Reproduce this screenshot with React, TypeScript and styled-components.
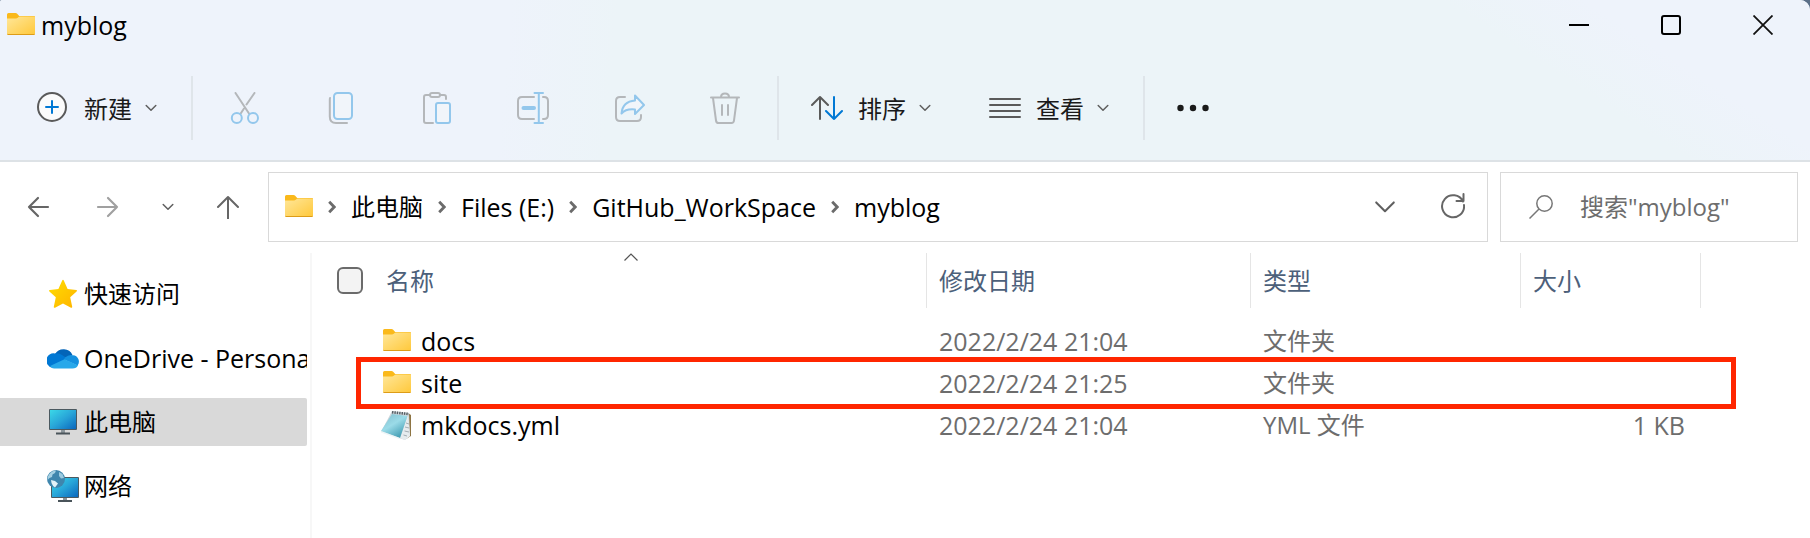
import React from "react";
import styled, { createGlobalStyle } from "styled-components";

const sans = `"Open Sans", "Noto Sans CJK SC", sans-serif`;

const GlobalStyle = createGlobalStyle`
  *, *::before, *::after { box-sizing: border-box; }
  body {
    margin: 0;
    background: #ffffff;
    color: #000000;
    font-family: ${sans};
    font-size: 24px;
    line-height: 32px;
  }
  button, input { font: inherit; color: inherit; }
  svg { display: block; flex: none; }
`;

const Window = styled.div`
  display: flex;
  flex-direction: column;
  min-height: 100vh;
`;

const Backdrop = styled.div`
  background: #5b6f88;
`;

const Header = styled.header`
  border-radius: 2px 10px 0 0;
  border-bottom: 2px solid #dde2e6;
  background:
    linear-gradient(95deg, #eef3fb 28%, #eef3fb00 34%),
    linear-gradient(33deg, #eef3fb00 82%, #eef3fb 89%),
    #ecf4f8;
`;

const TitleBar = styled.div`
  display: flex;
  align-items: center;
  height: 50px;
  padding: 0 1px 0 7px;
`;

const Title = styled.h1`
  flex: 1;
  margin: 0 0 0 6px;
  font-size: 25px;
  font-weight: 400;
`;

const PlainButton = styled.button`
  display: flex;
  align-items: center;
  justify-content: center;
  padding: 0;
  border: 0;
  background: none;
`;

const CaptionButton = styled(PlainButton)`
  width: 92px;
  height: 50px;
`;

const Toolbar = styled.div`
  display: flex;
  align-items: center;
  height: 110px;
  padding: 6px 0 0 9px;
`;

const Separator = styled.span`
  width: 2px;
  height: 64px;
  margin: 0 4px;
  background: #dfe5ea;
`;

const MenuButton = styled(PlainButton)`
  height: 64px;
  padding: 0 30px 0 28px;
  color: #1a1a1a;
`;

const MenuLabel = styled.span`
  margin: 0 13px 0 15px;
  padding-top: 2px;
`;

const ToolButton = styled(PlainButton)<{ $width: number }>`
  width: ${(p) => p.$width}px;
  height: 64px;
`;

const NavRow = styled.div`
  display: flex;
  align-items: center;
  padding: 10px 12px 11px 4px;
`;

const NavButton = styled(PlainButton)<{ $width: number }>`
  width: ${(p) => p.$width}px;
  height: 68px;
`;

const AddressBar = styled.div`
  display: flex;
  flex: 1;
  align-items: center;
  height: 70px;
  margin: 0 12px 0 6px;
  padding-left: 16px;
  border: 1px solid #d9d9d9;
`;

const Crumbs = styled.nav`
  display: flex;
  flex: 1;
  align-items: center;
  gap: 15px;
  margin-left: 15px;
`;

const Crumb = styled.a<{ $latin: boolean }>`
  color: #000000;
  font-size: ${(p) => (p.$latin ? 25 : 24)}px;
  text-decoration: none;
  white-space: nowrap;
`;

const SearchBox = styled.label`
  display: flex;
  align-items: center;
  gap: 27px;
  width: 298px;
  height: 70px;
  padding: 0 12px 0 28px;
  border: 1px solid #d9d9d9;
`;

const SearchInput = styled.input`
  flex: 1;
  min-width: 0;
  padding: 0;
  border: 0;
  outline: 0;
  background: none;
  &::placeholder { color: #6d6d6d; opacity: 1; }
`;

const Body = styled.div`
  display: flex;
  flex: 1;
`;

const Sidebar = styled.nav`
  display: flex;
  flex: none;
  flex-direction: column;
  gap: 16px;
  width: 312px;
  padding: 17px 3px 0 0;
  border-right: 2px solid #f7f7f7;
`;

const Place = styled.a<{ $active?: boolean; $latin: boolean }>`
  display: flex;
  align-items: center;
  gap: 5px;
  height: 48px;
  padding-left: 47px;
  overflow: hidden;
  border-radius: 0 2px 2px 0;
  background: ${(p) => (p.$active ? "#d9d9d9" : "transparent")};
  color: #000000;
  font-size: ${(p) => (p.$latin ? 25 : 24)}px;
  text-decoration: none;
  white-space: nowrap;
`;

const Files = styled.main`
  flex: 1;
  padding-right: 109px;
`;

const FileTable = styled.table`
  width: 100%;
  table-layout: fixed;
  border-collapse: collapse;
`;

const Column = styled.col<{ $width?: number }>`
  width: ${(p) => (p.$width ? `${p.$width}px` : "auto")};
`;

const HeadCell = styled.th`
  padding: 0 0 12px;
  color: #4c607a;
  font-weight: 400;
  text-align: left;
`;

const HeadLabel = styled.div<{ $first?: boolean }>`
  position: relative;
  display: flex;
  align-items: center;
  height: 55px;
  margin-left: ${(p) => (p.$first ? 24 : 0)}px;
  padding-left: ${(p) => (p.$first ? 1 : 12)}px;
  border-right: 1px solid #e5e5e5;
`;

const SortMark = styled.span`
  position: absolute;
  top: 0;
  left: 50%;
  margin-left: -7px;
`;

const SelectAll = styled.input`
  appearance: none;
  width: 26px;
  height: 27px;
  margin: 0 23px 0 0;
  border: 2px solid #6b6b6b;
  border-radius: 6px;
  background: #f3f3f3;
`;

const FileRow = styled.tr`
  position: relative;
  height: 42px;
`;

const Cell = styled.td<{ $align?: "right"; $latin?: boolean }>`
  padding: 0 16px 0 12px;
  color: #6d6d6d;
  font-size: ${(p) => (p.$latin ? 25 : 24)}px;
  text-align: ${(p) => p.$align ?? "left"};
  white-space: nowrap;
`;

const NameCell = styled.td`
  padding: 0 0 0 69px;
  font-size: 25px;
`;

const FileName = styled.span`
  display: flex;
  align-items: center;
  gap: 8px;
`;

const IconSlot = styled.span`
  display: flex;
  justify-content: center;
  width: 32px;
`;

const Highlight = styled.span`
  position: absolute;
  top: -5px;
  bottom: -5px;
  left: 44px;
  right: -35px;
  border: 5px solid #ff2600;
  pointer-events: none;
`;

const FolderIcon = () => (
  <svg width="28" height="32" viewBox="0 0 28 32" aria-hidden="true">
    <defs>
      <linearGradient id="folder" x1="0" y1="0" x2="1" y2="1">
        <stop offset="0" stopColor="#ffe79a" />
        <stop offset="1" stopColor="#ffc83a" />
      </linearGradient>
    </defs>
    <path d="M0 5.5Q0 4 1.5 4H8.5Q9.5 4 10.2 4.8L12.2 7H27Q28 7 28 8V12H0z" fill="#fab91b" />
    <path d="M0 9.5H9Q10 9.5 10.8 8.7L11.6 8Q12.1 7.4 13 7.4H27Q28 7.4 28 8.4V24.5Q28 26 26.5 26H1.5Q0 26 0 24.5z" fill="url(#folder)" />
    <path d="M0 24.4Q.2 26 1.5 26H26.5Q27.8 26 28 24.4Q27.6 25 26.5 25H1.5Q.4 25 0 24.4z" fill="#dd9c17" />
  </svg>
);

const NotepadIcon = () => (
  <svg width="32" height="32" viewBox="0 0 32 32" aria-hidden="true">
    <defs>
      <linearGradient id="pad" x1="0" y1="0" x2=".7" y2="1">
        <stop offset="0" stopColor="#7fbccb" />
        <stop offset=".5" stopColor="#9bdbe8" />
        <stop offset="1" stopColor="#3f9bb2" />
      </linearGradient>
    </defs>
    <path d="M27 4L30 6V27L25 30z" fill="#8d7443" />
    <path d="M11 2L28 4L29 27L24 31L0 23z" fill="#cfd7dc" />
    <path d="M27 5L29 27L24 31L19 29z" fill="#e6ebee" />
    <path d="M11 5L26.500 7L19 29L0 22z" fill="url(#pad)" />
    <path d="M0 22L19 29L18.500 30.300L.5 23.700z" fill="#eef6f8" />
    <path d="M11 3.200L28 5" stroke="#555d62" strokeWidth="2.600" strokeDasharray="1.400 1" />
    <path d="M25 14L28 15M24 18L28 19M23.500 22L28 23M22.500 26L26 27" stroke="#a4adb3" />
  </svg>
);

const StarIcon = () => (
  <svg width="32" height="32" viewBox="0 0 32 32" aria-hidden="true">
    <defs>
      <linearGradient id="star" x1="0" y1="0" x2="1" y2="1">
        <stop offset="0" stopColor="#ffde00" />
        <stop offset="1" stopColor="#ffb300" />
      </linearGradient>
    </defs>
    <path d="M15.200 2.500Q16 1 16.800 2.500L20.600 11.100L29.300 12Q30.700 12.400 29.600 13.500L23.200 19.200L25.200 28.800Q25.200 30.300 24 29.700L16 25.500L8 29.700Q6.600 30.200 6.800 28.800L8.800 19.200L2.400 13.500Q1.300 12.400 2.800 12L11.400 11.100z" fill="url(#star)" />
  </svg>
);

const CloudIcon = () => (
  <svg width="32" height="32" viewBox="0 0 32 32" aria-hidden="true">
    <path d="M8 12A10 10 0 0 1 25.500 13L17 18z" fill="#0364b8" />
    <path d="M8 11.500Q12 10.800 15 13L21 17L5 25.500A7 7 0 0 1 8 11.500z" fill="#0078d4" />
    <path d="M18 15.500Q22 12 26 13.300A6.300 6.300 0 0 1 30.500 23.500L17 17.500z" fill="#1490df" />
    <path d="M3 24L17.500 17.200L31 23.200Q29.500 26.500 25.500 26.500H7Q4.500 26.500 3 24z" fill="#28a8ea" />
  </svg>
);

const ScreenGradient = () => (
  <defs>
    <linearGradient id="screen" x1="0" y1="0" x2="1" y2="1">
      <stop offset="0" stopColor="#3bd8e8" />
      <stop offset=".5" stopColor="#28a5d8" />
      <stop offset="1" stopColor="#0a67bd" />
    </linearGradient>
  </defs>
);

const ComputerIcon = () => (
  <svg width="32" height="32" viewBox="0 0 32 32" aria-hidden="true">
    <ScreenGradient />
    <rect x="2" y="3" width="28" height="21" rx="1" fill="#4b5960" />
    <rect x="3" y="4" width="26" height="19" fill="url(#screen)" />
    <path d="M14 24H18V27H14z" fill="#8b959b" />
    <path d="M9 26.500H23V28.500H9z" fill="#4a545a" />
  </svg>
);

const NetworkIcon = () => (
  <svg width="32" height="32" viewBox="0 0 32 32" aria-hidden="true">
    <ScreenGradient />
    <rect x="4" y="7" width="28" height="21" rx="1" fill="#4b5960" />
    <rect x="5" y="8" width="26" height="19" fill="url(#screen)" />
    <path d="M16 28H20V31H16z" fill="#8b959b" />
    <path d="M11 30H25V32H11z" fill="#4a545a" />
    <circle cx="9" cy="9" r="9" fill="#3f86ad" />
    <path d="M2 4.500Q5 .5 9 .5L8 3L5.500 4.500L5 7L2.500 8L.5 10Q0 7 2 4.500z" fill="#a5d0e2" />
    <path d="M4 10L8 11L11 13.500L8 17.500Q5.500 16 4.500 13z" fill="#e3f2f7" />
    <path d="M12 2L15.500 4L17 8L14 8.500L12 6z" fill="#9ccbe0" />
  </svg>
);

const Chevron = ({ size = 12, color = "#5f5f5f", width = 1.5 }: { size?: number; color?: string; width?: number }) => (
  <svg width={size} height={size} viewBox="0 0 12 12" fill="none" stroke={color} strokeWidth={width} strokeLinejoin="round" strokeLinecap="round" aria-hidden="true">
    <path d="M1.200 3.500L6 8.300L10.800 3.500" />
  </svg>
);

const CrumbArrow = () => (
  <svg width="8" height="14" viewBox="0 0 8 14" fill="none" stroke="#6b6b6b" strokeWidth="2.800" aria-hidden="true">
    <path d="M1.200 1.800L6.200 7L1.200 12.200" />
  </svg>
);

const grey = "#b4b7ba";
const blue = "#93c7ec";

const ToolIcon = ({ children }: { children: React.ReactNode }) => (
  <svg width="32" height="32" viewBox="0 0 32 32" fill="none" strokeWidth="2" strokeLinecap="round" strokeLinejoin="round" aria-hidden="true">
    {children}
  </svg>
);

const CutIcon = () => (
  <ToolIcon>
    <path d="M6.500 1L20 21.500M25.500 1L17.500 12.500M15 16.500L11.700 21.500" stroke={grey} />
    <circle cx="7.800" cy="26" r="5" stroke={blue} />
    <circle cx="24" cy="26" r="5" stroke={blue} />
  </ToolIcon>
);

const CopyIcon = () => (
  <ToolIcon>
    <path d="M5 6Q4.800 6.500 4.800 8V24.500Q4.800 31 11 31H22" stroke={grey} />
    <rect x="9" y="1" width="18" height="26" rx="3.500" stroke={blue} fill="#f1f5fa" />
  </ToolIcon>
);

const PasteIcon = () => (
  <ToolIcon>
    <path d="M9 3H5Q3 3 3 5V29Q3 31 5 31H12M19 3H23Q25 3 25 5V7" stroke={grey} />
    <rect x="9" y="1" width="10" height="4" rx="2" stroke={grey} />
    <rect x="15" y="11" width="14" height="20" rx="2" stroke={blue} fill="#f1f5fa" />
  </ToolIcon>
);

const RenameIcon = () => (
  <ToolIcon>
    <path d="M17 5H5Q1 5 1 9V23Q1 27 5 27H17M26 5H27Q31 5 31 9V23Q31 27 27 27H26" stroke={grey} />
    <path d="M17.500 1H26M17.500 31H26M21.800 1V31" stroke={blue} />
    <path d="M6.500 16H17" stroke={blue} strokeWidth="4" />
  </ToolIcon>
);

const ShareIcon = () => (
  <ToolIcon>
    <path d="M12 5H7Q3 5 3 9V25Q3 29 7 29H24Q28 29 28 25V23" stroke={grey} />
    <path d="M22 3.500L31 13L22 22V17.500Q13 16.500 8.500 21.500Q9.500 9.500 22 8.500z" stroke={blue} fill="#f1f5fa" />
  </ToolIcon>
);

const DeleteIcon = () => (
  <ToolIcon>
    <path d="M2 5.500H30M12 5Q12 1.500 16 1.500T20 5M4 6L7 28.500Q7.300 31 9.500 31H22.500Q24.700 31 25 28.500L28 6M13 13V23M19 13V23" stroke={grey} />
  </ToolIcon>
);

const NewIcon = () => (
  <ToolIcon>
    <circle cx="15" cy="15" r="14" stroke="#5a5a5a" fill="#fbfbfb" />
    <path d="M15 9V21M9 15H21" stroke="#0078d4" />
  </ToolIcon>
);

const SortIcon = () => (
  <ToolIcon>
    <path d="M9 27V5M1 13L9 5L17 13" stroke="#5a5a5a" />
    <path d="M23 5V27M15 19L23 27L31 19" stroke="#0078d4" />
  </ToolIcon>
);

const ViewIcon = () => (
  <ToolIcon>
    <path d="M1 7H31M1 13H31M1 19H31M1 25H31" stroke="#5a5a5a" />
  </ToolIcon>
);

const MoreIcon = () => (
  <ToolIcon>
    <g fill="#1a1a1a">
      <circle cx="3.500" cy="16" r="3.200" />
      <circle cx="16" cy="16" r="3.200" />
      <circle cx="28.500" cy="16" r="3.200" />
    </g>
  </ToolIcon>
);

const ArrowIcon = ({ turn = 0, color = "#666666" }: { turn?: number; color?: string }) => (
  <svg width="24" height="24" viewBox="0 0 24 24" fill="none" stroke={color} strokeWidth="2.200" strokeLinecap="round" strokeLinejoin="round" aria-hidden="true">
    <path d="M22 12H3M12 3L3 12L12 21" transform={`rotate(${turn} 12.500 12)`} />
  </svg>
);

const UpIcon = () => (
  <svg width="24" height="24" viewBox="0 0 24 24" fill="none" stroke="#666666" strokeWidth="2" strokeLinecap="round" strokeLinejoin="round" aria-hidden="true">
    <path d="M12 23.500V2M2 12L12 2L22 12" />
  </svg>
);

const editTools = [
  { label: "剪切", Icon: CutIcon },
  { label: "复制", Icon: CopyIcon },
  { label: "粘贴", Icon: PasteIcon },
  { label: "重命名", Icon: RenameIcon },
  { label: "共享", Icon: ShareIcon },
  { label: "删除", Icon: DeleteIcon },
];

const isLatin = (text: string) => !/[\u4e00-\u9fff]/.test(text);

const crumbs = ["此电脑", "Files (E:)", "GitHub_WorkSpace", "myblog"];

const places = [
  { label: "快速访问", Icon: StarIcon },
  { label: "OneDrive - Personal", Icon: CloudIcon },
  { label: "此电脑", Icon: ComputerIcon, active: true },
  { label: "网络", Icon: NetworkIcon },
];

const files = [
  { name: "docs", date: "2022/2/24 21:04", type: "文件夹", size: "", Icon: FolderIcon },
  { name: "site", date: "2022/2/24 21:25", type: "文件夹", size: "", Icon: FolderIcon, marked: true },
  { name: "mkdocs.yml", date: "2022/2/24 21:04", type: "YML 文件", size: "1 KB", Icon: NotepadIcon },
];

const Menu = ({ label, icon }: { label: string; icon: React.ReactNode }) => (
  <MenuButton type="button">
    {icon}
    <MenuLabel>{label}</MenuLabel>
    <Chevron />
  </MenuButton>
);

export default function App() {
  return (
    <Window>
      <GlobalStyle />
      <Backdrop>
        <Header>
          <TitleBar>
            <FolderIcon />
            <Title>myblog</Title>
            <CaptionButton type="button" aria-label="最小化">
              <svg width="20" height="20" viewBox="0 0 20 20" stroke="#000" strokeWidth="2"><path d="M0 10H20" /></svg>
            </CaptionButton>
            <CaptionButton type="button" aria-label="最大化">
              <svg width="20" height="20" viewBox="0 0 20 20" fill="none" stroke="#000" strokeWidth="2"><rect x="1" y="1" width="18" height="18" rx="2" /></svg>
            </CaptionButton>
            <CaptionButton type="button" aria-label="关闭">
              <svg width="20" height="20" viewBox="0 0 20 20" stroke="#111" strokeWidth="1.800"><path d="M.5 .5L19.500 19.500M19.500 .5L.5 19.500" /></svg>
            </CaptionButton>
          </TitleBar>
          <Toolbar>
            <Menu label="新建" icon={<NewIcon />} />
            <Separator />
            {editTools.map(({ label, Icon }) => (
              <ToolButton key={label} type="button" aria-label={label} $width={96}>
                <Icon />
              </ToolButton>
            ))}
            <Separator />
            <Menu label="排序" icon={<SortIcon />} />
            <Menu label="查看" icon={<ViewIcon />} />
            <Separator />
            <ToolButton type="button" aria-label="更多" $width={88}>
              <MoreIcon />
            </ToolButton>
          </Toolbar>
        </Header>
      </Backdrop>

      <NavRow>
        <NavButton type="button" aria-label="后退" $width={68}><ArrowIcon /></NavButton>
        <NavButton type="button" aria-label="前进" $width={70}><ArrowIcon turn={180} color="#a0a0a0" /></NavButton>
        <NavButton type="button" aria-label="最近位置" $width={52}><Chevron /></NavButton>
        <NavButton type="button" aria-label="向上" $width={68}><UpIcon /></NavButton>
        <AddressBar>
          <FolderIcon />
          <Crumbs aria-label="路径">
            {crumbs.map((name) => (
              <React.Fragment key={name}>
                <CrumbArrow />
                <Crumb href="#" $latin={isLatin(name)}>{name}</Crumb>
              </React.Fragment>
            ))}
          </Crumbs>
          <NavButton type="button" aria-label="以前的位置" $width={68}><Chevron size={22} width={1.1} /></NavButton>
          <NavButton type="button" aria-label="刷新" $width={68}>
            <svg width="24" height="28" viewBox="0 0 24 28" fill="none" stroke="#666" strokeWidth="2" strokeLinecap="round" strokeLinejoin="round">
              <path d="M22 8.500A11 11 0 1 0 23 12M22.500 1V8H15.500" />
            </svg>
          </NavButton>
        </AddressBar>
        <SearchBox>
          <svg width="24" height="24" viewBox="0 0 24 24" fill="none" stroke="#777" strokeWidth="1.500" aria-hidden="true">
            <circle cx="15.500" cy="8.500" r="7.700" />
            <path d="M10 14L.5 23.500" />
          </svg>
          <SearchInput type="text" aria-label="搜索" placeholder={'搜索"myblog"'} />
        </SearchBox>
      </NavRow>

      <Body>
        <Sidebar aria-label="导航">
          {places.map(({ label, Icon, active }) => (
            <Place key={label} href="#" $active={active} $latin={isLatin(label)}>
              <Icon />
              {label}
            </Place>
          ))}
        </Sidebar>
        <Files>
          <FileTable>
            <colgroup>
              <Column />
              <Column $width={324} />
              <Column $width={270} />
              <Column $width={180} />
            </colgroup>
            <thead>
              <tr>
                <HeadCell>
                  <HeadLabel $first>
                    <SelectAll type="checkbox" aria-label="全选" />
                    名称
                    <SortMark>
                      <svg width="14" height="8" viewBox="0 0 14 8" fill="none" stroke="#555" strokeWidth="1.200"><path d="M.5 7.500L7 1L13.500 7.500" /></svg>
                    </SortMark>
                  </HeadLabel>
                </HeadCell>
                <HeadCell><HeadLabel>修改日期</HeadLabel></HeadCell>
                <HeadCell><HeadLabel>类型</HeadLabel></HeadCell>
                <HeadCell><HeadLabel>大小</HeadLabel></HeadCell>
              </tr>
            </thead>
            <tbody>
              {files.map(({ name, date, type, size, Icon, marked }) => (
                <FileRow key={name}>
                  <NameCell>
                    <FileName>
                      <IconSlot><Icon /></IconSlot>
                      {name}
                    </FileName>
                    {marked && <Highlight />}
                  </NameCell>
                  <Cell $latin>{date}</Cell>
                  <Cell>{type}</Cell>
                  <Cell $align="right" $latin>{size}</Cell>
                </FileRow>
              ))}
            </tbody>
          </FileTable>
        </Files>
      </Body>
    </Window>
  );
}
